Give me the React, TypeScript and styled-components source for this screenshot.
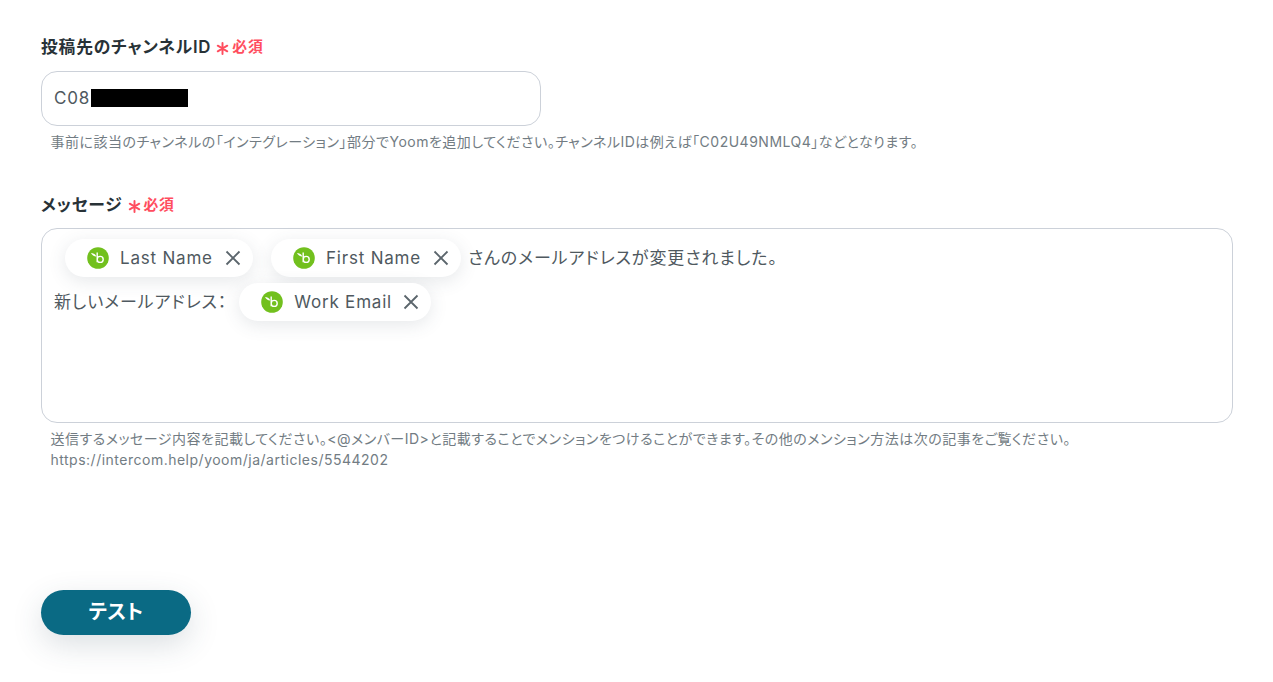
import React from "react";
import styled, { createGlobalStyle } from "styled-components";

const Global = createGlobalStyle`
  html, body { margin: 0; padding: 0; background: #fff; }
  body {
    font-family: Inter, "Noto Sans CJK JP", sans-serif;
    font-feature-settings: "palt";
    letter-spacing: 0.05em;
  }
`;

const Page = styled.main`
  width: 1273px;
  height: 682px;
  box-sizing: border-box;
  padding: 36px 40px 0 41px;
  display: flex;
  flex-direction: column;
  overflow: hidden;
`;

const Field = styled.section<{ $height: number }>`
  height: ${(p) => p.$height}px;
  display: flex;
  flex-direction: column;
`;

const Label = styled.div`
  display: flex;
  align-items: center;
  height: 23px;
  margin-top: -2px;
  margin-bottom: 2px;
  font-size: 16.8px;
  font-weight: 600;
  color: #283237;
`;

const Star = styled.svg`
  width: 13px;
  height: 13px;
  margin: 5px 3px 0 5px;
`;

const Required = styled.span`
  font-size: 14.8px;
  font-weight: 600;
  color: #ff4d5e;
`;

const Input = styled.div`
  width: 500px;
  height: 55px;
  box-sizing: border-box;
  margin-top: 12px;
  padding: 0 12px 2px;
  border: 1px solid #ccd1d9;
  border-radius: 16px;
  display: flex;
  align-items: center;
  font-size: 17px;
  color: #4f5960;
`;

const Redaction = styled.span`
  width: 97px;
  height: 18px;
  margin-left: 1px;
  background: #000;
`;

const Help = styled.p`
  margin: 5px 0 0 9.5px;
  font-size: 14px;
  line-height: 21px;
  letter-spacing: 0.5px;
  color: #727c83;
`;

const TextArea = styled.div`
  width: 1192px;
  height: 195px;
  box-sizing: border-box;
  margin-top: 11px;
  padding: 10px 12px;
  border: 1px solid #ccd1d9;
  border-radius: 16px;
  font-size: 17px;
  color: #4f5960;
`;

const Line = styled.div`
  display: flex;
  align-items: center;
  height: 38px;
  margin-bottom: 6px;
  white-space: nowrap;
`;

const LineText = styled.span<{ $left?: number }>`
  margin-top: -3px;
  margin-left: ${(p) => p.$left ?? 0}px;
  letter-spacing: 0.055em;
`;

const Chip = styled.span<{ $left: number; $width: number }>`
  display: inline-flex;
  align-items: center;
  box-sizing: border-box;
  width: ${(p) => p.$width}px;
  height: 38px;
  margin-left: ${(p) => p.$left}px;
  margin-right: 8px;
  padding-left: 22px;
  border-radius: 19px;
  background: #fff;
  box-shadow: 0 4px 18px rgba(60, 75, 90, 0.13);
  font-size: 17px;
  color: #4f5960;
`;

const ChipLogo = styled.svg`
  width: 22px;
  height: 22px;
  flex: none;
  margin-right: 11px;
`;

const ChipText = styled.span`
  flex: 1;
`;

const Close = styled.svg`
  width: 16px;
  height: 16px;
  flex: none;
  margin-right: 12px;
`;

const TestButton = styled.button`
  width: 150px;
  height: 45px;
  padding: 0 0 5px;
  border: 0;
  border-radius: 23px;
  background: #0a6a84;
  color: #fff;
  font-family: inherit;
  font-feature-settings: inherit;
  font-size: 20px;
  font-weight: 700;
  letter-spacing: 0.01em;
  box-shadow: 0 10px 30px rgba(50, 70, 90, 0.17);
`;

const Asterisk = () => (
  <Star viewBox="0 0 12 12" fill="none" stroke="#ff4d5e" strokeWidth="1.8" strokeLinecap="round">
    <path d="M6 1v10M1.6 3.4l8.8 5.2M10.4 3.4L1.6 8.6" />
  </Star>
);

const Tag = ({ text, left, width }: { text: string; left: number; width: number }) => (
  <Chip $left={left} $width={width}>
    <ChipLogo viewBox="0 0 22 22">
      <circle cx="11" cy="11" r="10.8" fill="#72c01e" />
      <path
        d="M10.2 5.6v9.6M10.2 12.4a3 3 0 1 0 6 0a3 3 0 1 0-6 0"
        fill="none"
        stroke="#fff"
        strokeWidth="1.4"
      />
      <path d="M4 6c2 .1 4.1.9 5.4 3.4c-2.2.2-4.2-1-5.4-3.4z" fill="#fff" />
    </ChipLogo>
    <ChipText>{text}</ChipText>
    <Close viewBox="0 0 16 16" fill="none" stroke="#5b656c" strokeWidth="1.8">
      <path d="M1.5 1.5l13 13M14.5 1.5l-13 13" />
    </Close>
  </Chip>
);

export default function App() {
  return (
    <Page>
      <Global />
      <Field $height={158}>
        <Label>
          投稿先のチャンネルID
          <Asterisk />
          <Required>必須</Required>
        </Label>
        <Input>
          C08
          <Redaction />
        </Input>
        <Help>事前に該当のチャンネルの「インテグレーション」部分でYoomを追加してください。チャンネルIDは例えば「C02U49NMLQ4」などとなります。</Help>
      </Field>
      <Field $height={396}>
        <Label>
          メッセージ
          <Asterisk />
          <Required>必須</Required>
        </Label>
        <TextArea>
          <Line>
            <Tag text="Last Name" left={11} width={188} />
            <Tag text="First Name" left={10} width={190} />
            <LineText $left={-1}>さんのメールアドレスが変更されました。</LineText>
          </Line>
          <Line>
            <LineText>新しいメールアドレス：</LineText>
            <Tag text="Work Email" left={12} width={192} />
          </Line>
        </TextArea>
        <Help>
          送信するメッセージ内容を記載してください。&lt;@メンバーID&gt;と記載することでメンションをつけることができます。その他のメンション方法は次の記事をご覧ください。
          <br />
          https://intercom.help/yoom/ja/articles/5544202
        </Help>
      </Field>
      <TestButton>テスト</TestButton>
    </Page>
  );
}
